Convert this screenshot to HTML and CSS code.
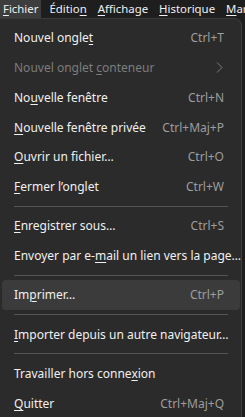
FILE: index.html
```html
<!DOCTYPE html>
<html lang="fr">
<head>
<meta charset="utf-8">
<link rel="stylesheet" href="styles.css">
</head>
<body>
<nav class="menubar">
  <span class="top-item active"><u>F</u>ichier</span>
  <span class="top-item">Éditio<u>n</u></span>
  <span class="top-item"><u>A</u>ffichage</span>
  <span class="top-item"><u>H</u>istorique</span>
  <span class="top-item"><u>M</u>arque-pages</span>
</nav>
<div class="panel">
  <div class="row"><span class="label">Nouvel ongle<u>t</u></span><span class="key">Ctrl+T</span></div>
  <div class="row disabled"><span class="label">Nouvel onglet <u>c</u>onteneur</span><svg class="chev" width="7" height="11" viewBox="0 0 7 11"><path d="M1 0.5 L6 5.5 L1 10.5" fill="none" stroke="#7d7d7d" stroke-width="1"/></svg></div>
  <div class="row"><span class="label">No<u>u</u>velle fenêtre</span><span class="key">Ctrl+N</span></div>
  <div class="row"><span class="label"><u>N</u>ouvelle fenêtre privée</span><span class="key">Ctrl+Maj+P</span></div>
  <div class="row"><span class="label"><u>O</u>uvrir un fichier…</span><span class="key">Ctrl+O</span></div>
  <div class="row"><span class="label"><u>F</u>ermer l’onglet</span><span class="key">Ctrl+W</span></div>
  <div class="sep"></div>
  <div class="row"><span class="label"><u>E</u>nregistrer sous…</span><span class="key">Ctrl+S</span></div>
  <div class="row"><span class="label">Envoyer par e-<u>m</u>ail un lien vers la page…</span></div>
  <div class="sep"></div>
  <div class="row hover"><span class="label">Im<u>p</u>rimer…</span><span class="key">Ctrl+P</span></div>
  <div class="sep"></div>
  <div class="row"><span class="label"><u>I</u>mporter depuis un autre navigateur…</span></div>
  <div class="sep"></div>
  <div class="row"><span class="label">Travailler hors conne<u>x</u>ion</span></div>
  <div class="row"><span class="label"><u>Q</u>uitter</span><span class="key">Ctrl+Maj+Q</span></div>
</div>
</body>
</html>
```
FILE: styles.css
```css
html, body {
  margin: 0;
  padding: 0;
  background: #1e1e1e;
  overflow: hidden;
  width: 245px;
  height: 417px;
}
body {
  font-family: "Noto Sans", "Open Sans", sans-serif;
  font-size: 12px;
  color: #f0f0f0;
}
u {
  text-decoration: underline;
  text-decoration-thickness: 1px;
  text-underline-offset: 2px;
}
.menubar {
  display: flex;
  height: 18px;
  align-items: stretch;
  background: #1e1e1e;
  white-space: nowrap;
  overflow: hidden;
  font-size: 11.4px;
}
.top-item {
  display: flex;
  align-items: center;
  flex: none;
  padding: 0 3px 0 3px;
  margin-right: 5px;
  line-height: 18px;
}
.top-item.active {
  background: #3d3d3d;
}
.panel {
  width: 242px;
  background: #2b2b2b;
  border-top: 1px solid #3a3a3a;
  border-right: 1px solid #3e3e3e;
  border-top-right-radius: 8px;
  padding: 4px 0 0 0;
  height: 399px;
  box-sizing: border-box;
}
.row {
  display: flex;
  align-items: center;
  justify-content: space-between;
  height: 29.75px;
  margin: 0 1px 0 2px;
  padding: 0 16px 0 12px;
  border-radius: 4px;
  white-space: nowrap;
}
.row.hover {
  background: #3b3b3b;
}
.row.disabled .label {
  color: #7d7d7d;
}
.key {
  color: #9d9d9d;
}
.chev {
  margin-right: 1px;
}
.sep {
  height: 9.5px;
  display: flex;
  align-items: center;
  margin: 0 13px 0 14px;
}
.sep::before {
  content: "";
  flex: 1;
  height: 1px;
  background: #545454;
}
```
